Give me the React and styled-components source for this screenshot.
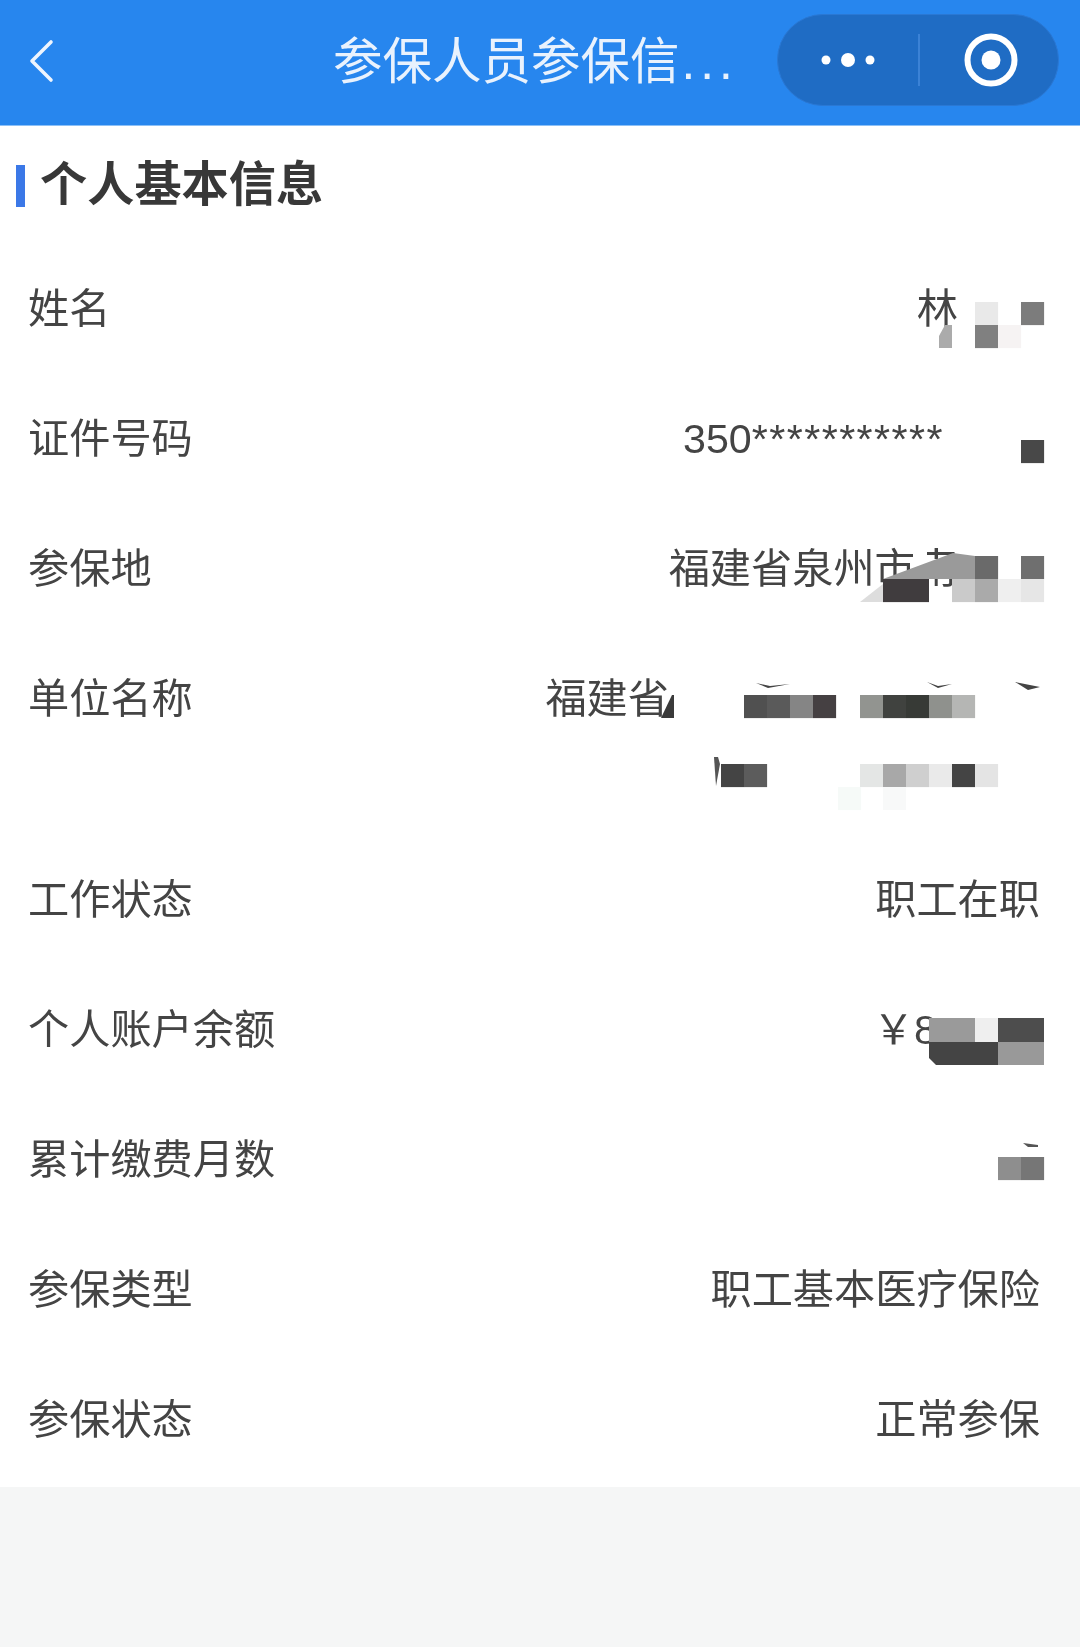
import React from "react";
import styled, { createGlobalStyle } from "styled-components";

const Global = createGlobalStyle`
  html, body { margin: 0; padding: 0; background: #f5f6f6; }
  body { font-family: "Liberation Sans", "Noto Sans CJK SC", sans-serif; }
`;

const Page = styled.div`
  width: 1080px;
  min-height: 1647px;
  background: #f5f6f6;
  overflow: hidden;
`;

const Header = styled.header`
  height: 126px;
  background: #2786ee;
  border-bottom: 1px solid #8cc0f7;
  box-sizing: border-box;
  display: flex;
  align-items: center;
  padding: 0 21px 6px 28px;
  color: #e9f2fd;
`;

const BackIcon = styled.svg`
  width: 26px;
  height: 44px;
  flex: none;
  margin-top: 3px;
`;

const Title = styled.h1`
  margin: 5px 0 0 279px;
  font-size: 49.5px;
  line-height: 60px;
  font-weight: 400;
  white-space: nowrap;
  filter: blur(0.4px);
`;

const Dots = styled.span`
  letter-spacing: 5px;
  margin-left: 2px;
`;

const Capsule = styled.div`
  margin-left: auto;
  width: 282px;
  height: 92px;
  border-radius: 46px;
  background: #1f6cc4;
  border: 1px solid #2a78d4;
  box-sizing: border-box;
  display: flex;
  align-items: center;
`;

const MoreSide = styled.div`
  flex: 0 0 140px;
  display: flex;
  align-items: center;
  justify-content: center;
  padding-left: 2px;
  box-sizing: border-box;
`;

const RingSide = styled.div`
  flex: 1;
  display: flex;
  align-items: center;
  justify-content: center;
  padding-left: 4px;
`;

const CapsuleLine = styled.div`
  width: 2px;
  height: 52px;
  background: #3b82d6;
`;

const Card = styled.main`
  background: #fff;
  padding-bottom: 3px;
`;

const SectionHead = styled.div`
  height: 117px;
  display: flex;
  align-items: flex-start;
  padding: 39px 0 0 16px;
  box-sizing: border-box;
  gap: 15px;
`;

const Accent = styled.span`
  width: 9px;
  height: 42px;
  background: #3b78e7;
  flex: none;
`;

const SectionTitle = styled.h2`
  margin: -5px 0 0;
  font-size: 47.2px;
  line-height: 50px;
  font-weight: 700;
  color: #383838;
  filter: blur(0.4px);
`;

const Row = styled.div`
  position: relative;
  display: flex;
  justify-content: space-between;
  padding: 31px 40px 28px 28px;
  font-size: 41.2px;
  line-height: 71px;
  color: #444;
`;

const Label = styled.div`
  white-space: nowrap;
  filter: blur(0.4px);
`;

const Value = styled.div`
  white-space: nowrap;
  text-align: right;
  padding-right: ${(p) => p.$inset || 0}px;
  filter: blur(0.4px);
`;

const Stars = styled.span`
  letter-spacing: 1.45px;
`;

const Mosaic = styled.svg`
  position: absolute;
  left: ${(p) => p.$x}px;
  top: ${(p) => p.$y - p.$rowTop}px;
  width: ${(p) => p.$w}px;
  height: ${(p) => p.$h}px;
`;

const Mask = ({ rowTop, box, tiles = [], polys = [] }) => {
  const [x, y, w, h] = box;
  return (
    <Mosaic $x={x} $y={y} $w={w} $h={h} $rowTop={rowTop} viewBox={`${x} ${y} ${w} ${h}`} aria-hidden="true">
      {polys
        .filter(([, fill]) => fill === "#ffffff")
        .map(([points, fill], i) => (
          <polygon key={i} points={points} fill={fill} />
        ))}
      {tiles.map(([tx, ty, tw, th, fill], i) => (
        <rect key={i} x={tx} y={ty} width={tw} height={th} fill={fill} />
      ))}
      {polys
        .filter(([, fill]) => fill !== "#ffffff")
        .map(([points, fill], i) => (
          <polygon key={i} points={points} fill={fill} />
        ))}
    </Mosaic>
  );
};

const T = 23.1;

export default function App() {
  return (
    <Page>
      <Global />
      <Header>
        <BackIcon viewBox="0 0 26 44" fill="none">
          <path d="M23 3 L4 22 L23 41" stroke="#eef5fe" strokeWidth="3.6" strokeLinecap="round" strokeLinejoin="round" />
        </BackIcon>
        <Title>
          参保人员参保信<Dots>...</Dots>
        </Title>
        <Capsule>
          <MoreSide>
            <svg width="60" height="20" viewBox="0 0 60 20" fill="#fff">
              <circle cx="7" cy="10" r="4.5" />
              <circle cx="29" cy="10" r="7" />
              <circle cx="51" cy="10" r="4.5" />
            </svg>
          </MoreSide>
          <CapsuleLine />
          <RingSide>
            <svg width="56" height="56" viewBox="0 0 56 56" fill="none">
              <circle cx="28" cy="28" r="23.5" stroke="#fff" strokeWidth="6" />
              <circle cx="28" cy="28" r="9.5" fill="#fff" />
            </svg>
          </RingSide>
        </Capsule>
      </Header>
      <Card>
        <SectionHead>
          <Accent />
          <SectionTitle>个人基本信息</SectionTitle>
        </SectionHead>

        <Row>
          <Label>姓名</Label>
          <Value $inset={82}>林</Value>
          <Mask
            rowTop={243}
            box={[930, 295, 120, 60]}
            tiles={[
              [975, 302, T, T, "#e9e9e9"],
              [1021, 302, T, T, "#7c7c7c"],
              [975, 325, T, T, "#808080"],
              [998, 325, T, T, "#f6f3f3"],
            ]}
            polys={[["939,348 939,336 945,325 952,325 952,348", "#ababab"]]}
          />
        </Row>

        <Row>
          <Label>证件号码</Label>
          <Value $inset={96}>
            350<Stars>***********</Stars>
          </Value>
          <Mask rowTop={373} box={[1015, 435, 35, 35]} tiles={[[1021, 440, T, T, "#484848"]]} />
        </Row>

        <Row>
          <Label>参保地</Label>
          <Value $inset={83}>福建省泉州市南</Value>
          <Mask
            rowTop={503}
            box={[850, 545, 200, 62]}
            tiles={[
              [975, 556, T, T, "#6a6a6a"],
              [1021, 556, T, T, "#6f6f6f"],
              [883, 579, 46, T, "#403c3e"],
              [952, 579, T, T, "#cacaca"],
              [975, 579, T, T, "#aaaaaa"],
              [998, 579, T, T, "#efefef"],
              [1021, 579, T, T, "#e6e6e6"],
            ]}
            polys={[
              ["913,545 927,545 927,559 955,559 955,576 913,576", "#ffffff"],
              ["883,579 953,553 975,556 975,579", "#9a9a9a"],
              ["860,602 883,584 883,602", "#dddddd"],
            ]}
          />
        </Row>

        <Row>
          <Label>单位名称</Label>
          <Value $inset={371}>
            福建省
            <br />
            &nbsp;
          </Value>
          <Mask
            rowTop={633}
            box={[655, 675, 395, 140]}
            tiles={[
              [744, 695, T, T, "#505050"],
              [767, 695, T, T, "#5a5a5a"],
              [790, 695, T, T, "#858585"],
              [813, 695, T, T, "#454042"],
              [860, 695, T, T, "#929490"],
              [883, 695, T, T, "#40423f"],
              [906, 695, T, T, "#373a36"],
              [929, 695, T, T, "#8f918d"],
              [952, 695, T, T, "#b5b6b4"],
              [721, 764, T, T, "#444444"],
              [744, 764, T, T, "#5c5c5c"],
              [860, 764, T, T, "#e4e6e5"],
              [883, 764, T, T, "#a8a8a8"],
              [906, 764, T, T, "#cfcfcf"],
              [929, 764, T, T, "#eaeaea"],
              [952, 764, T, T, "#444444"],
              [975, 764, T, T, "#e4e4e4"],
              [838, 787, T, T, "#f6faf8"],
              [883, 787, T, T, "#f8f9f9"],
            ]}
            polys={[
              ["672,695 674,695 674,718 661,718", "#3a3a3a"],
              ["756,683 770,686 790,684 768,688", "#444444"],
              ["927,682 938,686 952,684 938,688", "#444444"],
              ["1015,682 1040,687 1028,690", "#444444"],
              ["714,757 718,757 720,764 716,786", "#555555"],
            ]}
          />
        </Row>

        <Row>
          <Label>工作状态</Label>
          <Value>职工在职</Value>
        </Row>

        <Row>
          <Label>个人账户余额</Label>
          <Value $inset={103}>￥8</Value>
          <Mask
            rowTop={964}
            box={[925, 1012, 125, 60]}
            tiles={[
              [929, 1018, 46, 24, "#9a9a9a"],
              [975, 1018, T, 24, "#efefef"],
              [998, 1018, 46, 24, "#4d4d4d"],
              [998, 1042, 46, 23, "#999999"],
            ]}
            polys={[["929,1042 998,1042 998,1065 936,1065 929,1058", "#444444"]]}
          />
        </Row>

        <Row>
          <Label>累计缴费月数</Label>
          <Value />
          <Mask
            rowTop={1094}
            box={[990, 1135, 60, 50]}
            tiles={[
              [998, 1157, T, T, "#8e8e8e"],
              [1021, 1157, T, T, "#767676"],
            ]}
            polys={[["1023,1143 1038,1145 1038,1147 1028,1147", "#555555"]]}
          />
        </Row>

        <Row>
          <Label>参保类型</Label>
          <Value>职工基本医疗保险</Value>
        </Row>

        <Row>
          <Label>参保状态</Label>
          <Value>正常参保</Value>
        </Row>
      </Card>
    </Page>
  );
}
